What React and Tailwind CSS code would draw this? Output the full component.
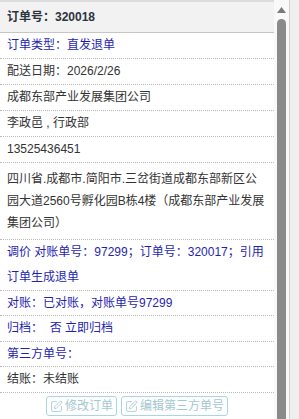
import { SquarePen } from 'lucide-react'

const font = { fontFamily: '"Liberation Sans", "Noto Sans CJK SC", sans-serif' }

function Row({ children, blue, className = '' }) {
  return (
    <div
      className={`px-[7px] border-b border-dotted border-[#b8b8b8] text-[12px] leading-[25px] ${
        blue ? 'text-[#1f1fb0]' : 'text-[#333]'
      } ${className}`}
    >
      {children}
    </div>
  )
}

function GhostButton({ label }) {
  return (
    <button className="flex items-center gap-[2px] h-[20px] px-[3px] rounded-[3px] border border-[#a9d6df] text-[#a4c8d0] text-[12px] leading-none bg-white">
      <SquarePen size={13} strokeWidth={1.6} />
      <span>{label}</span>
    </button>
  )
}

export default function App() {
  return (
    <div className="w-[299px] h-[419px] flex overflow-hidden bg-white" style={font}>
      <div className="w-[274px] flex flex-col">
        <div className="h-[33px] border-t-2 border-t-[#dcdcdc] border-b border-b-[#c6c6c6] bg-[#f2f2f2] px-[7px] flex items-center text-[12px] font-bold text-[#2e3340]">
          订单号：320018
        </div>
        <Row blue>订单类型：直发退单</Row>
        <Row>配送日期：2026/2/26</Row>
        <Row>成都东部产业发展集团公司</Row>
        <Row>李政邑 , 行政部</Row>
        <Row>13525436451</Row>
        <Row className="py-[5px] !leading-[22px]">
          <div className="whitespace-nowrap">四川省.成都市.简阳市.三岔街道成都东部新区公</div>
          <div className="whitespace-nowrap">园大道2560号孵化园B栋4楼（成都东部产业发展</div>
          <div>集团公司）</div>
        </Row>
        <Row blue>
          <div className="whitespace-nowrap">调价 对账单号：97299；订单号：320017；引用</div>
          <div>订单生成退单</div>
        </Row>
        <Row blue className="!leading-[24px]">对账：已对账，对账单号97299</Row>
        <Row blue>归档：&nbsp; 否 立即归档</Row>
        <Row blue className="!leading-[24px]">第三方单号：</Row>
        <Row>结账：未结账</Row>
        <div className="flex justify-center gap-[4px] pt-[3px]">
          <GhostButton label="修改订单" />
          <GhostButton label="编辑第三方单号" />
        </div>
      </div>
      <div className="w-[15px] bg-[#f9f9f9] flex flex-col items-center pt-[7px]">
        <svg width="9" height="6" viewBox="0 0 9 6" className="ml-[-1px]">
          <polygon points="4.5,0 9,6 0,6" fill="#7a7a7a" />
        </svg>
        <div className="mt-[6px] w-[9px] flex-1 bg-[#8a8a8a] rounded-t-[5px] ml-[-1px]" />
      </div>
      <div className="w-[1px] bg-[#cfcfcf]" />
      <div className="flex-1 bg-[#efefef]" />
    </div>
  )
}
